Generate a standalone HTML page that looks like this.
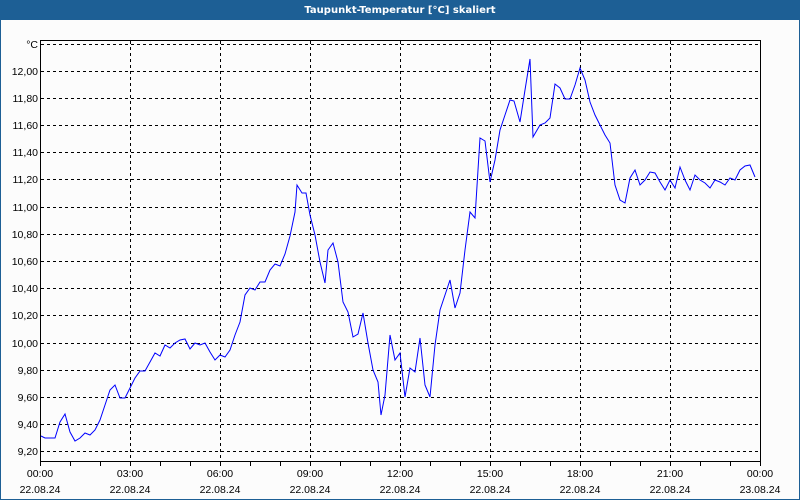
<!DOCTYPE html>
<html><head><style>
body{margin:0;width:800px;height:500px;overflow:hidden;background:#fcfcfc;font-family:"Liberation Sans",sans-serif}
</style></head><body>
<svg width="800" height="500" xmlns="http://www.w3.org/2000/svg" style="display:block">
<rect x="0" y="0" width="800" height="500" fill="#1d5f95"/>
<rect x="1" y="20" width="798" height="479" fill="#fcfcfc"/>
<text x="400" y="13" fill="#fff" font-size="10" font-weight="bold" text-anchor="middle" font-family="DejaVu Sans, sans-serif">Taupunkt-Temperatur [°C] skaliert</text>
<g stroke="#000" stroke-width="1" stroke-dasharray="3,3" fill="none">
<path d="M41 44.5H760M41 71.5H760M41 98.5H760M41 125.5H760M41 152.5H760M41 179.5H760M41 207.5H760M41 234.5H760M41 261.5H760M41 288.5H760M41 315.5H760M41 343.5H760M41 370.5H760M41 397.5H760M41 424.5H760M41 451.5H760"/>
<path d="M130.5 41V461M220.5 41V461M310.5 41V461M400.5 41V461M490.5 41V461M580.5 41V461M670.5 41V461"/>
</g>
<g stroke="#000" stroke-width="1" fill="none">
<path d="M40.5 40V461.5H760.5V40M40 40.5H761"/>
<path d="M70.5 461v5M100.5 461v5M130.5 461v5M160.5 461v5M190.5 461v5M220.5 461v5M250.5 461v5M280.5 461v5M310.5 461v5M340.5 461v5M370.5 461v5M400.5 461v5M430.5 461v5M460.5 461v5M490.5 461v5M520.5 461v5M550.5 461v5M580.5 461v5M610.5 461v5M640.5 461v5M670.5 461v5M700.5 461v5M730.5 461v5M40.5 461v5M760.5 461v5"/>
</g>
<g font-size="10.5" fill="#000" text-anchor="end" font-family="Liberation Sans, sans-serif">
<text x="38" y="48">°C</text><text x="38" y="75">12,00</text><text x="38" y="102">11,80</text><text x="38" y="129">11,60</text><text x="38" y="156">11,40</text><text x="38" y="183">11,20</text><text x="38" y="211">11,00</text><text x="38" y="238">10,80</text><text x="38" y="265">10,60</text><text x="38" y="292">10,40</text><text x="38" y="319">10,20</text><text x="38" y="347">10,00</text><text x="38" y="374">9,80</text><text x="38" y="401">9,60</text><text x="38" y="428">9,40</text><text x="38" y="455">9,20</text>
</g>
<g font-size="10.5" fill="#000" text-anchor="middle" font-family="Liberation Sans, sans-serif">
<text x="40" y="477">00:00</text><text x="40" y="493">22.08.24</text>
<text x="130" y="477">03:00</text><text x="130" y="493">22.08.24</text>
<text x="220" y="477">06:00</text><text x="220" y="493">22.08.24</text>
<text x="310" y="477">09:00</text><text x="310" y="493">22.08.24</text>
<text x="400" y="477">12:00</text><text x="400" y="493">22.08.24</text>
<text x="490" y="477">15:00</text><text x="490" y="493">22.08.24</text>
<text x="580" y="477">18:00</text><text x="580" y="493">22.08.24</text>
<text x="670" y="477">21:00</text><text x="670" y="493">22.08.24</text>
<text x="760" y="477">00:00</text><text x="760" y="493">23.08.24</text>
</g>
<polyline fill="none" stroke="#0000ff" stroke-width="1" points="41,436 45,438 55,438 60,422 65,414 70,432 75,441 80,438 85,433 90,435 95,430 100,420 105,405 110,390 115,385 120,398 125,398 130,388 135,378 140,371 145,371 150,362 155,353 160,356 165,345 170,348 175,343 180,340 185,339 190,349 195,343 200,345 205,343 210,352 215,360 220,355 225,357 230,350 235,335 240,322 245,295 250,288 255,290 260,282 265,282 270,270 275,264 280,266 285,254 290,236 295,212 297,185 302,193 306,193 310,215 315,235 320,262 325,283 328,250 333,243 338,262 343,302 348,312 353,337 358,334 363,313 368,343 373,370 378,382 381,415 385,395 390,335 395,360 400,353 405,397 410,368 415,372 420,338 425,385 430,397 435,345 440,310 445,295 450,280 455,308 460,293 465,250 470,212 475,218 480,138 485,141 490,182 495,160 500,130 505,115 510,100 514,101 520,122 525,90 530,59 533,137 540,125 545,123 550,118 555,84 560,88 565,99 570,99 575,85 580,68 585,80 590,102 595,115 600,125 605,135 610,143 615,185 620,200 625,203 630,178 635,170 640,185 645,180 650,172 655,173 660,182 665,190 670,180 675,188 680,167 685,180 690,190 695,175 700,180 705,183 710,188 715,180 720,182 725,185 730,178 735,180 740,170 745,166 750,165 755,177"/>
</svg>
</body></html>
